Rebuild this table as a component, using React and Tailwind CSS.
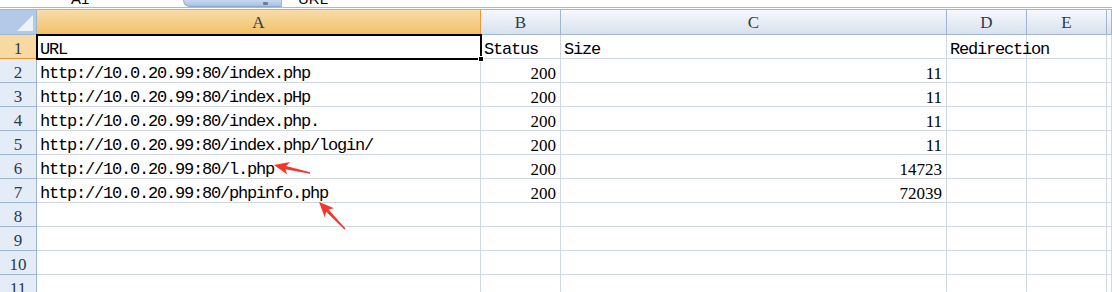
import React from "react";

const mono = "font-['Liberation_Mono',monospace] text-[17px] tracking-[-1.2px]";
const serif = "font-['Liberation_Serif',serif] text-[17px]";

const cols = ["A", "B", "C", "D", "E", ""];
const widths = ["w-[444px]", "w-[80px]", "w-[386px]", "w-[80px]", "w-[80px]", "flex-1"];

const rows = [
  ["URL", "Status", "Size", "Redirection"],
  ["http://10.0.20.99:80/index.php", 200, 11],
  ["http://10.0.20.99:80/index.pHp", 200, 11],
  ["http://10.0.20.99:80/index.php.", 200, 11],
  ["http://10.0.20.99:80/index.php/login/", 200, 11],
  ["http://10.0.20.99:80/l.php", 200, 14723],
  ["http://10.0.20.99:80/phpinfo.php", 200, 72039],
  [],
  [],
  [],
  [],
];

// tapered arrow: triangle head at the tip, thin body to the tail
function arrowPoints(tip, tail) {
  const dx = tail[0] - tip[0];
  const dy = tail[1] - tip[1];
  const len = Math.hypot(dx, dy);
  const ux = dx / len;
  const uy = dy / len;
  const nx = -uy;
  const ny = ux;
  const head = 15;
  const hw = 6.5;
  const bw = 1.6;
  const bx = tip[0] + ux * head;
  const by = tip[1] + uy * head;
  const pts = [
    [tip[0], tip[1]],
    [bx + nx * hw, by + ny * hw],
    [bx + nx * bw - ux * 3, by + ny * bw - uy * 3],
    [tail[0] + nx * 0.7, tail[1] + ny * 0.7],
    [tail[0] - nx * 0.7, tail[1] - ny * 0.7],
    [bx - nx * bw - ux * 3, by - ny * bw - uy * 3],
    [bx - nx * hw, by - ny * hw],
  ];
  return pts.map((p) => p.join(",")).join(" ");
}

function Cell({ value, col }) {
  const isNum = typeof value === "number";
  return (
    <div
      className={`${widths[col]} h-full shrink-0 border-r border-b border-[#d0d7e5] overflow-visible whitespace-nowrap flex items-end pb-[0px] ${
        isNum ? `justify-end pr-[4px] ${serif}` : `pl-[3px] ${mono}`
      } text-black leading-none`}
    >
      {value}
    </div>
  );
}

export default function App() {
  return (
    <div className="relative w-[1112px] h-[292px] overflow-hidden bg-white">
      {/* formula bar, mostly scrolled off */}
      <div className="flex h-[7px] overflow-hidden bg-white">
        <div className="w-[183px] relative">
          <span className="absolute left-[71px] top-[-12px] text-[15px] font-['Liberation_Sans',sans-serif] text-black">A1</span>
        </div>
        <div className="w-[98px] h-[7px] rounded-bl-[16px] rounded-br-[2px] border-b border-l border-[#8faad0] bg-gradient-to-b from-[#c8d9ef] to-[#a7c0e4] relative">
          <span className="absolute right-[13px] top-[2px] w-[5px] h-[3px] bg-[#6f7e93] rounded-[1px]" />
        </div>
        <div className="w-[1px] bg-[#a5b9d1]" />
        <div className="flex-1 relative">
          <span className="absolute left-[16px] top-[-12px] text-[15px] font-['Liberation_Sans',sans-serif] text-black">URL</span>
        </div>
      </div>
      <div className="h-[1px] bg-[#a7bad2]" />
      <div className="h-[1px] bg-white" />
      <div className="h-[1px] bg-[#9eb6ce]" />

      {/* column headers */}
      <div className="flex h-[25px]">
        <div className="w-[37px] h-full shrink-0 border-r border-b border-[#9eb6ce] bg-[#b4c9e7] relative">
          <svg className="absolute inset-0" width="36" height="24">
            <polygon points="17,21 33,5 33,21" fill="#eef3fa" />
          </svg>
        </div>
        {cols.map((c, i) => (
          <div
            key={i}
            className={`${widths[i]} h-full shrink-0 border-r border-b flex items-center justify-center pt-[2px] ${serif} text-[#2b3a4f] ${
              i === 0
                ? "bg-gradient-to-b from-[#f9dcaa] to-[#f1c163] border-[#f29536]"
                : "bg-gradient-to-b from-[#f6f8fc] to-[#d9e1ee] border-[#9eb6ce]"
            }`}
          >
            {c}
          </div>
        ))}
      </div>

      {/* sheet body */}
      {rows.map((r, ri) => (
        <div key={ri} className="flex h-[24px]">
          <div
            className={`w-[37px] h-full shrink-0 border-r border-b flex items-end justify-center pb-[1px] leading-none ${serif} text-[#2b3a4f] ${
              ri === 0 ? "bg-[#f9d9a2] border-[#f29536]" : "bg-[#e4ecf7] border-[#9eb6ce]"
            }`}
          >
            {ri + 1}
          </div>
          {cols.map((_, ci) => (
            <Cell key={ci} col={ci} value={r[ci]} />
          ))}
        </div>
      ))}

      {/* active cell A1 */}
      <div className="absolute left-[36px] top-[34px] w-[446px] h-[26px] border-2 border-black pointer-events-none" />
      <div className="absolute left-[478px] top-[56px] w-[6px] h-[6px] bg-black border border-white pointer-events-none" />

      {/* red markers */}
      <svg className="absolute inset-0 pointer-events-none" width="1112" height="292">
        <polygon points={arrowPoints([274, 165], [310, 173])} fill="#f5362b" />
        <polygon points={arrowPoints([319, 202], [345, 229])} fill="#f5362b" />
      </svg>
    </div>
  );
}
